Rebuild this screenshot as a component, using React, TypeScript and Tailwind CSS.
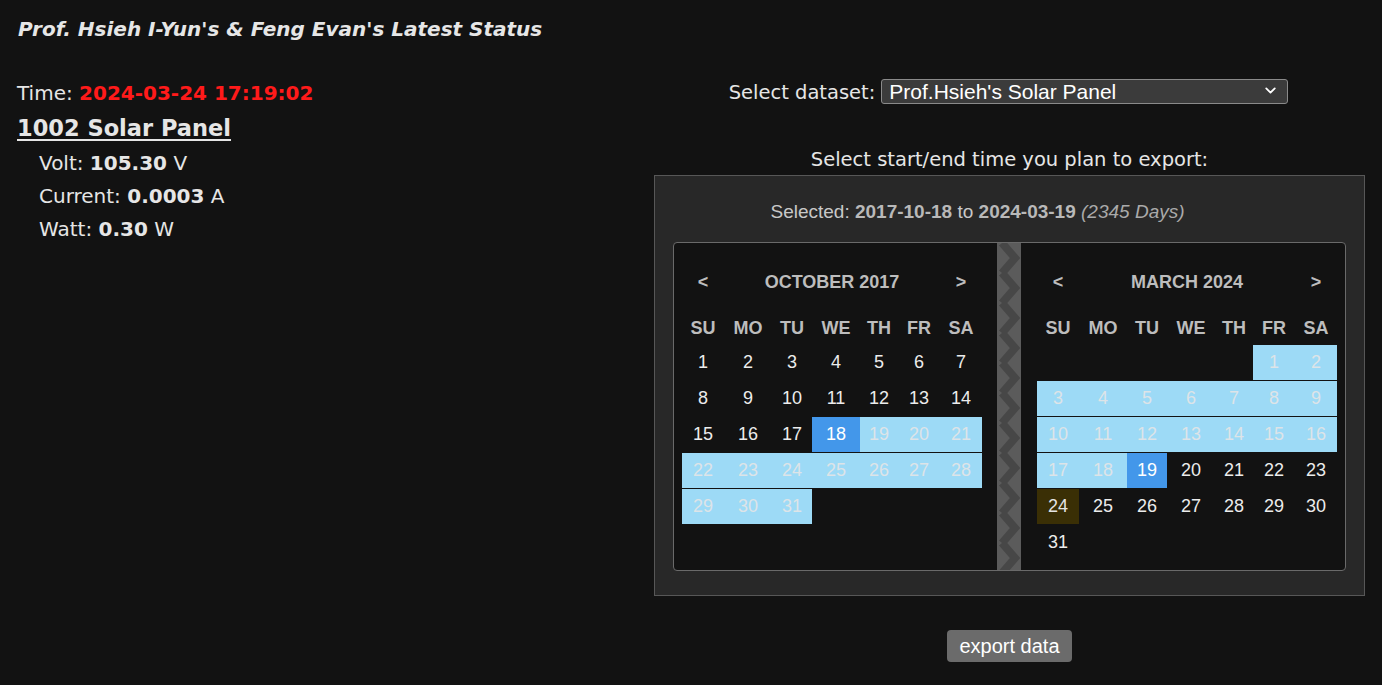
import { ChevronDown } from "lucide-react";

type DayState = "plain" | "range" | "edge" | "today";

const DAY_NAMES = ["SU", "MO", "TU", "WE", "TH", "FR", "SA"];

const CELL_STYLE: Record<DayState, string> = {
  plain: "text-[#ececec]",
  range: "bg-[#9ddaf6] text-[#dde4e8]",
  edge: "bg-[#4397ea] text-white",
  today: "bg-[#3a2f05] text-[#e4e4e4]",
};

function Month({
  title,
  offset,
  days,
  stateOf,
  className,
}: {
  title: string;
  offset: number;
  days: number;
  stateOf: (d: number) => DayState;
  className?: string;
}) {
  const cells: (number | null)[] = [
    ...Array.from({ length: offset }, () => null),
    ...Array.from({ length: days }, (_, i) => i + 1),
  ];

  return (
    <div className={className}>
      <div className="flex h-[30px] items-center text-[18px] font-bold text-[#bdbdbd]">
        <span className="w-[42px] text-center">&lt;</span>
        <span className="flex-1 text-center">{title}</span>
        <span className="w-[42px] text-center">&gt;</span>
      </div>
      <div className="mt-[16px] grid h-[30px] grid-cols-[42px_48px_40px_48px_38px_42px_42px] items-center text-[18px] font-bold text-[#bdbdbd]">
        {DAY_NAMES.map((n) => (
          <span key={n} className="text-center">
            {n}
          </span>
        ))}
      </div>
      <div className="mt-[2px] grid grid-cols-[42px_48px_40px_48px_38px_42px_42px] auto-rows-[36px] text-[18px]">
        {cells.map((d, i) =>
          d === null ? (
            <div key={`e${i}`} />
          ) : (
            <div
              key={d}
              className={`flex h-[35px] items-center justify-center ${CELL_STYLE[stateOf(d)]}`}
            >
              {d}
            </div>
          )
        )}
      </div>
    </div>
  );
}

// grey strip with a darker zig-zag between the two months
function Zigzag() {
  return (
    <div className="w-[24px] shrink-0">
      <svg className="block h-full w-full" aria-hidden>
        <defs>
          <pattern id="zz" width="24" height="30" patternUnits="userSpaceOnUse">
            <rect width="24" height="30" fill="#5b5b5b" />
            <polyline
              points="5,0 18,15 5,30"
              fill="none"
              stroke="#474747"
              strokeWidth="8"
            />
          </pattern>
        </defs>
        <rect width="100%" height="100%" fill="url(#zz)" />
      </svg>
    </div>
  );
}

export default function App() {
  return (
    <div className="min-h-screen bg-[#121212] text-[#e6e6e6] font-['DejaVu_Sans',sans-serif]">
      <h1 className="pl-[18px] pt-[17px] text-[20px] font-bold italic leading-[24px]">
        Prof. Hsieh I-Yun's &amp; Feng Evan's Latest Status
      </h1>

      <div className="mt-[39px] flex">
        {/* latest readings */}
        <div className="flex-1 pl-[17px]">
          <div className="h-[26px] text-[20px] leading-[26px]">
            Time: <span className="font-bold text-[#ff1a1a]">2024-03-24 17:19:02</span>
          </div>
          <div className="mt-[8px] text-[22.5px] font-bold leading-[28px] underline underline-offset-[3px]">
            1002 Solar Panel
          </div>
          <ul className="mt-[5px] pl-[22px] text-[20px] leading-[33px]">
            <li>
              Volt: <b>105.30</b> V
            </li>
            <li>
              Current: <b>0.0003</b> A
            </li>
            <li>
              Watt: <b>0.30</b> W
            </li>
          </ul>
        </div>

        {/* export panel */}
        <div className="mr-[17px] flex w-[711px] flex-col items-center">
          <div className="flex h-[26px] items-center gap-[6px] pr-[2px] text-[19.5px]">
            <span>Select dataset:</span>
            <div className="relative">
              <select className="h-[25px] w-[407px] appearance-none rounded-[3px] border border-[#8a8a8a] bg-[#3b3b3b] pl-[7px] font-['Liberation_Sans',sans-serif] text-[21px] leading-[23px] text-white outline-none">
                <option>Prof.Hsieh's Solar Panel</option>
              </select>
              <ChevronDown
                className="pointer-events-none absolute right-[9px] top-[4px] h-[17px] w-[17px] text-white"
                strokeWidth={2.5}
              />
            </div>
          </div>

          <p className="mt-[42px] text-[19.5px] leading-[24px]">
            Select start/end time you plan to export:
          </p>

          <div className="mt-[3px] w-full border border-[#575757] bg-[#282828] px-[18px] pb-[24px] pt-[26px] font-['Liberation_Sans',sans-serif]">
            <p className="pr-[64px] text-center text-[19px] leading-[20px] text-[#c8c8c8]">
              Selected: <b className="text-[#b9b9b9]">2017-10-18</b> to{" "}
              <b className="text-[#b9b9b9]">2024-03-19</b>{" "}
              <i className="text-[#aaaaaa]">(2345 Days)</i>
            </p>

            <div className="mt-[20px] flex overflow-hidden rounded-[4px] border border-[#6a6a6a] bg-[#121212]">
              <Month
                title="OCTOBER 2017"
                offset={0}
                days={31}
                stateOf={(d) => (d === 18 ? "edge" : d > 18 ? "range" : "plain")}
                className="w-[323px] pb-[9px] pl-[8px] pr-[15px] pt-[24px]"
              />
              <Zigzag />
              <Month
                title="MARCH 2024"
                offset={5}
                days={31}
                stateOf={(d) =>
                  d === 19 ? "edge" : d < 19 ? "range" : d === 24 ? "today" : "plain"
                }
                className="w-[323px] pb-[9px] pl-[16px] pr-[7px] pt-[24px]"
              />
            </div>
          </div>

          <button
            type="button"
            className="mt-[34px] h-[32px] rounded-[4px] bg-[#6b6b6b] px-[12px] font-['Liberation_Sans',sans-serif] text-[20px] text-white"
          >
            export data
          </button>
        </div>
      </div>
    </div>
  );
}
